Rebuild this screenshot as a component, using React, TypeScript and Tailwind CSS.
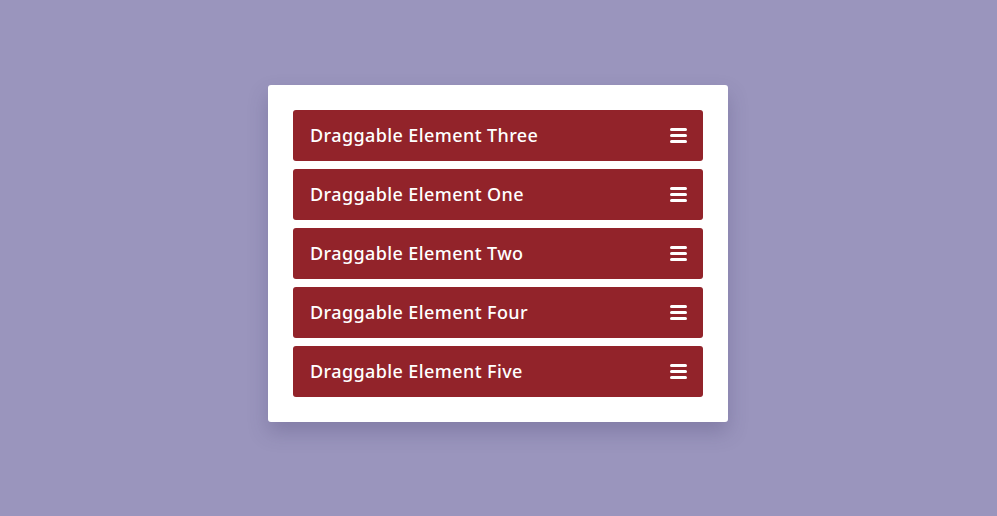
const ITEMS = ["Three", "One", "Two", "Four", "Five"];

function BarsIcon() {
  return (
    <svg width="17" height="15" viewBox="0 0 17 15" fill="#ffffff">
      <rect x="0" y="0" width="17" height="3" rx="1.5" />
      <rect x="0" y="6" width="17" height="3" rx="1.5" />
      <rect x="0" y="12" width="17" height="3" rx="1.5" />
    </svg>
  );
}

export default function App() {
  return (
    <div
      className="w-full h-[516px] bg-[#9a95bd] flex justify-center items-start pt-[85px] pr-px"
      style={{ fontFamily: '"Noto Sans", "Open Sans", sans-serif' }}
    >
      <div className="w-[460px] bg-white rounded-[3px] p-[25px] flex flex-col gap-[8px] shadow-[0_10px_20px_rgba(60,50,100,0.25)]">
        {ITEMS.map((name) => (
          <div
            key={name}
            className="h-[51px] bg-[#92232a] rounded-[3px] flex items-center justify-between pl-[17px] pr-[16px] cursor-grab"
          >
            <span className="text-white text-[18px] font-medium tracking-[0.4px]">
              Draggable Element {name}
            </span>
            <BarsIcon />
          </div>
        ))}
      </div>
    </div>
  );
}
